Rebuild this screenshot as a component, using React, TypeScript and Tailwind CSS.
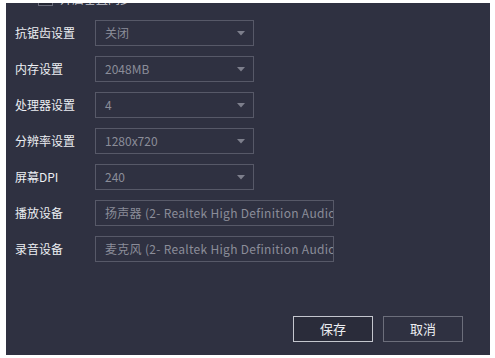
const font = { fontFamily: '"Noto Sans CJK SC", "Noto Sans", sans-serif' };

type Row = { label: string; value: string; wide?: boolean };

const rows: Row[] = [
  { label: "抗锯齿设置", value: "关闭" },
  { label: "内存设置", value: "2048MB" },
  { label: "处理器设置", value: "4" },
  { label: "分辨率设置", value: "1280x720" },
  { label: "屏幕DPI", value: "240" },
  { label: "播放设备", value: "扬声器 (2- Realtek High Definition Audio", wide: true },
  { label: "录音设备", value: "麦克风 (2- Realtek High Definition Audio", wide: true },
];

function Caret() {
  return (
    <svg width="8" height="5" viewBox="0 0 8 5" className="shrink-0" aria-hidden>
      <path d="M0 0h8L4 4.5z" fill="#7d7f8c" />
    </svg>
  );
}

export default function App() {
  return (
    <div className="h-[358px] w-[495px] bg-white pt-[3px] pl-[6px]" style={font}>
      <div className="flex h-[352px] w-[484px] flex-col overflow-hidden bg-[#2f3141] pl-[9px] pb-[13px] pr-[27px]">
        {/* top option, scrolled mostly out of view */}
        <div className="-mt-[12px] mb-[14px] flex h-[15px] items-center gap-[7px] pl-[23px]">
          <span className="h-[15px] w-[15px] border border-[#6a6c7a] bg-[#242633]" />
          <span className="text-[12px] leading-[15px] text-[#c9cad2]">开启垂直同步</span>
        </div>

        <div className="flex flex-col gap-[10px]">
          {rows.map((r) => (
            <div key={r.label} className="flex h-[26px] items-center">
              <span className="w-[80px] shrink-0 text-[12px] text-[#eceef2]">{r.label}</span>
              {r.wide ? (
                <div className="relative flex h-[26px] w-[239px] items-center overflow-hidden border border-[#575968] pl-[9px]">
                  <span className="whitespace-nowrap text-[12px] tracking-[0.3px] text-[#8b8d99]">{r.value}</span>
                </div>
              ) : (
                <div className="flex h-[26px] w-[159px] items-center justify-between border border-[#575968] pl-[9px] pr-[8px]">
                  <span className="text-[12px] text-[#8b8d99]">{r.value}</span>
                  <Caret />
                </div>
              )}
            </div>
          ))}
        </div>

        <div className="mt-auto flex justify-end gap-[10px]">
          <button className="flex h-[26px] w-[80px] items-center justify-center border border-[#c4c6ce] bg-[#2a2c3a] text-[13px] text-[#eceef2]">
            保存
          </button>
          <button className="flex h-[26px] w-[80px] items-center justify-center border border-[#6c6e7b] bg-[#2f3141] text-[13px] text-[#eceef2]">
            取消
          </button>
        </div>
      </div>
    </div>
  );
}
